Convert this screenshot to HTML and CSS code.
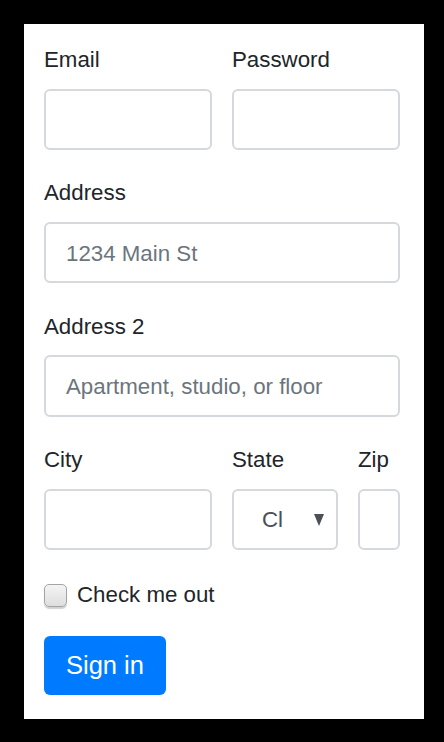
FILE: index.html
```html
<!DOCTYPE html>
<html lang="en">
<head>
<meta charset="utf-8">
<title>Form</title>
<link rel="stylesheet" href="styles.css">
</head>
<body>
<form class="panel">
  <div class="row row-2">
    <div class="group">
      <label class="label">Email</label>
      <div class="input"></div>
    </div>
    <div class="group">
      <label class="label">Password</label>
      <div class="input"></div>
    </div>
  </div>
  <div class="group">
    <label class="label">Address</label>
    <div class="input"><span class="placeholder">1234 Main St</span></div>
  </div>
  <div class="group">
    <label class="label">Address 2</label>
    <div class="input"><span class="placeholder">Apartment, studio, or floor</span></div>
  </div>
  <div class="row row-3">
    <div class="group">
      <label class="label">City</label>
      <div class="input"></div>
    </div>
    <div class="group">
      <label class="label">State</label>
      <div class="input select"><span class="select-text">Cl</span><span class="arrow"></span></div>
    </div>
    <div class="group">
      <label class="label">Zip</label>
      <div class="input"></div>
    </div>
  </div>
  <div class="check-row">
    <span class="checkbox"></span>
    <span class="check-label">Check me out</span>
  </div>
  <div class="btn">Sign in</div>
</form>
</body>
</html>
```

FILE: styles.css
```css
html, body {
  margin: 0;
  padding: 0;
  background: #000;
}
body {
  width: 444px;
  height: 742px;
  padding-top: 24px;
  box-sizing: border-box;
  font-family: "Liberation Sans", Arial, sans-serif;
  color: #212529;
}
.panel {
  margin: 0 0 0 24px;
  width: 400px;
  background: #fff;
  padding: 19px 24px 24px 20px;
  box-sizing: border-box;
  display: block;
}
.row {
  display: grid;
  column-gap: 20px;
}
.row-2 {
  grid-template-columns: 168px 168px;
}
.row-3 {
  grid-template-columns: 168px 106px 42px;
}
.group {
  margin-bottom: 26.33px;
}
.label {
  display: block;
  font-size: 22.3px;
  line-height: 34px;
  height: 33px;
  margin-bottom: 12.67px;
  color: #212529;
}
.input {
  height: 61.33px;
  box-sizing: border-box;
  border: 2px solid #d5d9de;
  border-radius: 6px;
  background: #fff;
  display: flex;
  align-items: center;
  padding: 2px 0 0 20px;
  font-size: 22.3px;
  white-space: nowrap;
  overflow: hidden;
}
.placeholder {
  color: #6c757d;
}
.select {
  padding-left: 28px;
  padding-right: 0;
  position: relative;
}
.select-text {
  color: #495057;
}
.arrow {
  position: absolute;
  left: 80px;
  top: 23px;
  width: 0;
  height: 0;
  border-left: 5.5px solid transparent;
  border-right: 5.5px solid transparent;
  border-top: 12px solid #4a5056;
}
.check-row {
  display: flex;
  align-items: flex-start;
  gap: 10px;
  height: 36px;
  margin-bottom: 23.67px;
}
.checkbox {
  width: 23px;
  height: 23px;
  margin-top: 8px;
  box-sizing: border-box;
  border: 1.5px solid #a4a4a4;
  border-radius: 5px;
  background: linear-gradient(#f4f4f4, #dedede);
  box-shadow: 0 1.5px 1px rgba(0, 0, 0, 0.18);
}
.check-label {
  font-size: 22.3px;
  line-height: 38px;
  color: #212529;
}
.btn {
  display: inline-flex;
  align-items: center;
  justify-content: center;
  width: 122px;
  height: 59px;
  box-sizing: border-box;
  background: #007bff;
  color: #fff;
  border-radius: 6px;
  font-size: 25.5px;
  line-height: 1;
  vertical-align: top;
}
```
